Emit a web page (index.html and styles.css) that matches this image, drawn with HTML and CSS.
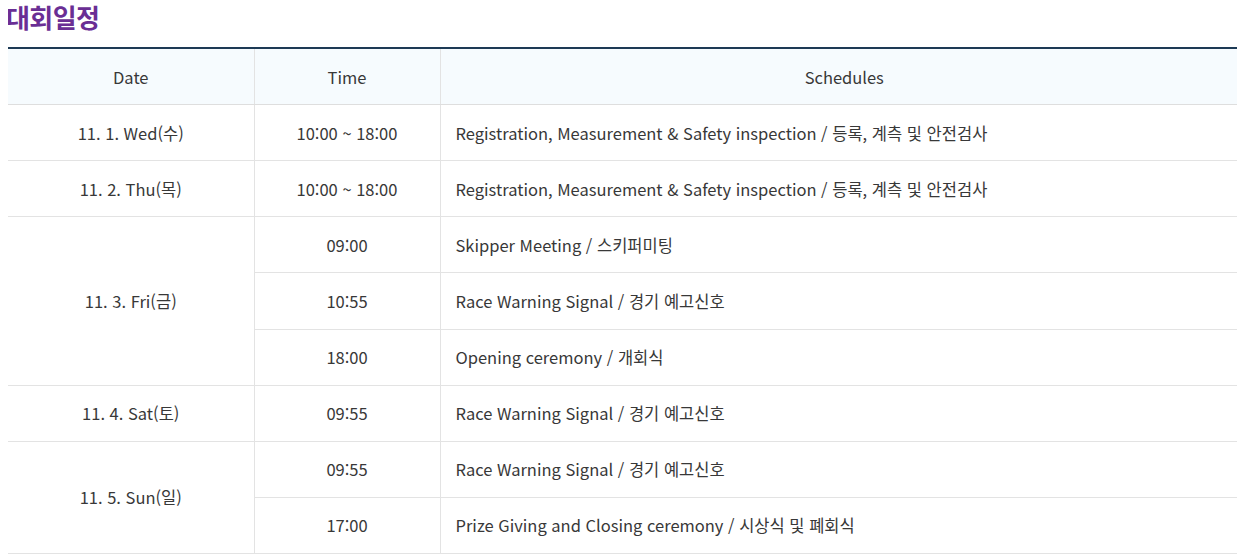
FILE: index.html
```html
<!DOCTYPE html>
<html lang="ko">
<head>
<meta charset="utf-8">
<title>대회일정</title>
<link rel="stylesheet" href="styles.css">
</head>
<body>
<h2 class="title">대회일정</h2>
<table class="schedule">
  <colgroup>
    <col class="c-date">
    <col class="c-time">
    <col class="c-sched">
  </colgroup>
  <thead>
    <tr><th>Date</th><th>Time</th><th>Schedules</th></tr>
  </thead>
  <tbody>
    <tr><td>11. 1. Wed(수)</td><td>10:00 ~ 18:00</td><td class="left">Registration, Measurement &amp; Safety inspection / 등록, 계측 및 안전검사</td></tr>
    <tr><td>11. 2. Thu(목)</td><td>10:00 ~ 18:00</td><td class="left">Registration, Measurement &amp; Safety inspection / 등록, 계측 및 안전검사</td></tr>
    <tr><td rowspan="3">11. 3. Fri(금)</td><td>09:00</td><td class="left">Skipper Meeting / 스키퍼미팅</td></tr>
    <tr><td>10:55</td><td class="left">Race Warning Signal / 경기 예고신호</td></tr>
    <tr><td>18:00</td><td class="left">Opening ceremony / 개회식</td></tr>
    <tr><td>11. 4. Sat(토)</td><td>09:55</td><td class="left">Race Warning Signal / 경기 예고신호</td></tr>
    <tr><td rowspan="2">11. 5. Sun(일)</td><td>09:55</td><td class="left">Race Warning Signal / 경기 예고신호</td></tr>
    <tr><td>17:00</td><td class="left">Prize Giving and Closing ceremony / 시상식 및 폐회식</td></tr>
  </tbody>
</table>
</body>
</html>
```
FILE: styles.css
```css
html, body {
  overflow: hidden;
}
body {
  margin: 0 0 0 8px;
  font-family: "Noto Sans CJK KR", "Noto Sans", sans-serif;
  color: #333;
  background: #fff;
}
.title {
  margin: 0 0 0 -2px;
  padding-top: 0;
  height: 47px;
  font-size: 26px;
  line-height: 34px;
  font-weight: 700;
  color: #6a2e94;
  letter-spacing: -0.6px;
}
.schedule {
  width: 1241px;
  border-collapse: collapse;
  border-top: 2px solid #1d3a55;
  font-size: 16.5px;
  line-height: 24px;
}
.c-date { width: 246px; }
.c-time { width: 186px; }
.schedule th,
.schedule td {
  height: 55.13px;
  padding: 0 15px;
  border: 1px solid #e3e3e3;
  border-top: 0;
  text-align: center;
  font-weight: 400;
  color: #383838;
  vertical-align: middle;
}
.schedule th {
  height: 55px;
  background: #f6fbfe;
  border-bottom-color: #dedede;
}
.schedule tr > :first-child { border-left: 0; }
.schedule td.left {
  text-align: left;
}
```
